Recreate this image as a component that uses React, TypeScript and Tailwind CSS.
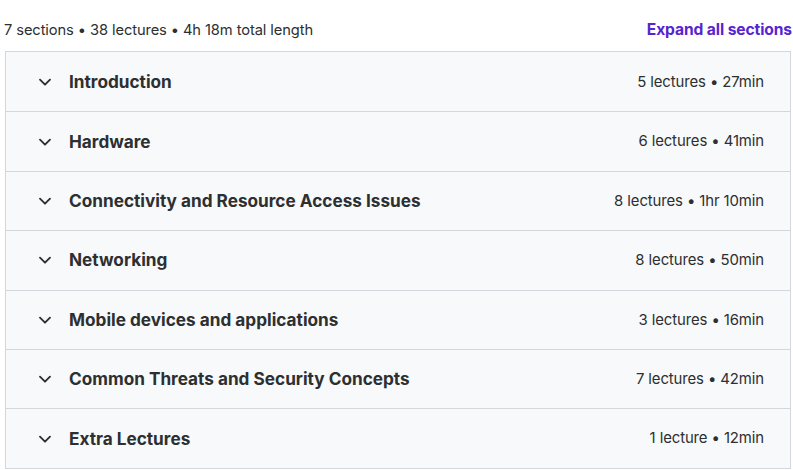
import React from 'react';

type Section = {
  title: string;
  lectures: number;
  length: string;
};

const sections: Section[] = [
  { title: 'Introduction', lectures: 5, length: '27min' },
  { title: 'Hardware', lectures: 6, length: '41min' },
  { title: 'Connectivity and Resource Access Issues', lectures: 8, length: '1hr 10min' },
  { title: 'Networking', lectures: 8, length: '50min' },
  { title: 'Mobile devices and applications', lectures: 3, length: '16min' },
  { title: 'Common Threats and Security Concepts', lectures: 7, length: '42min' },
  { title: 'Extra Lectures', lectures: 1, length: '12min' },
];

const Chevron: React.FC = () => (
  <svg width="16" height="16" viewBox="0 0 24 24" fill="none" className="text-[#2d2f31]">
    <path d="M4.5 8.5l7.5 7.5 7.5-7.5" stroke="currentColor" strokeWidth="2.8" strokeLinecap="round" strokeLinejoin="round" />
  </svg>
);

const App: React.FC = () => {
  return (
    <div className="w-[793px] h-[470px] bg-white pl-[5px] pr-[2px] font-['Inter',sans-serif] text-[#2d2f31] overflow-hidden">
      {/* Summary line */}
      <div className="flex items-center justify-between h-[51px]">
        <span className="text-[14.7px] -ml-[1px] pt-[9px] tracking-[-0.1px]">7 sections • 38 lectures • 4h 18m total length</span>
        <button className="text-[15.6px] font-bold text-[#5624d0] pt-[9px] -mr-[1px] tracking-[-0.1px]">Expand all sections</button>
      </div>

      {/* Section list */}
      <div className="border border-[#d1d7dc]">
        {sections.map((s, i) => (
          <div
            key={s.title}
            className={`flex items-center justify-between h-[59.4px] bg-[#f7f9fa] pl-[31px] pr-[26px] ${i > 0 ? 'border-t border-[#d1d7dc]' : ''}`}
          >
            <div className="flex items-center gap-[16px]">
              <Chevron />
              <span className="text-[17.2px] font-bold">{s.title}</span>
            </div>
            <span className="text-[14.9px] tracking-[-0.1px]">
              {s.lectures} {s.lectures === 1 ? 'lecture' : 'lectures'} • {s.length}
            </span>
          </div>
        ))}
      </div>
    </div>
  );
};

export default App;
